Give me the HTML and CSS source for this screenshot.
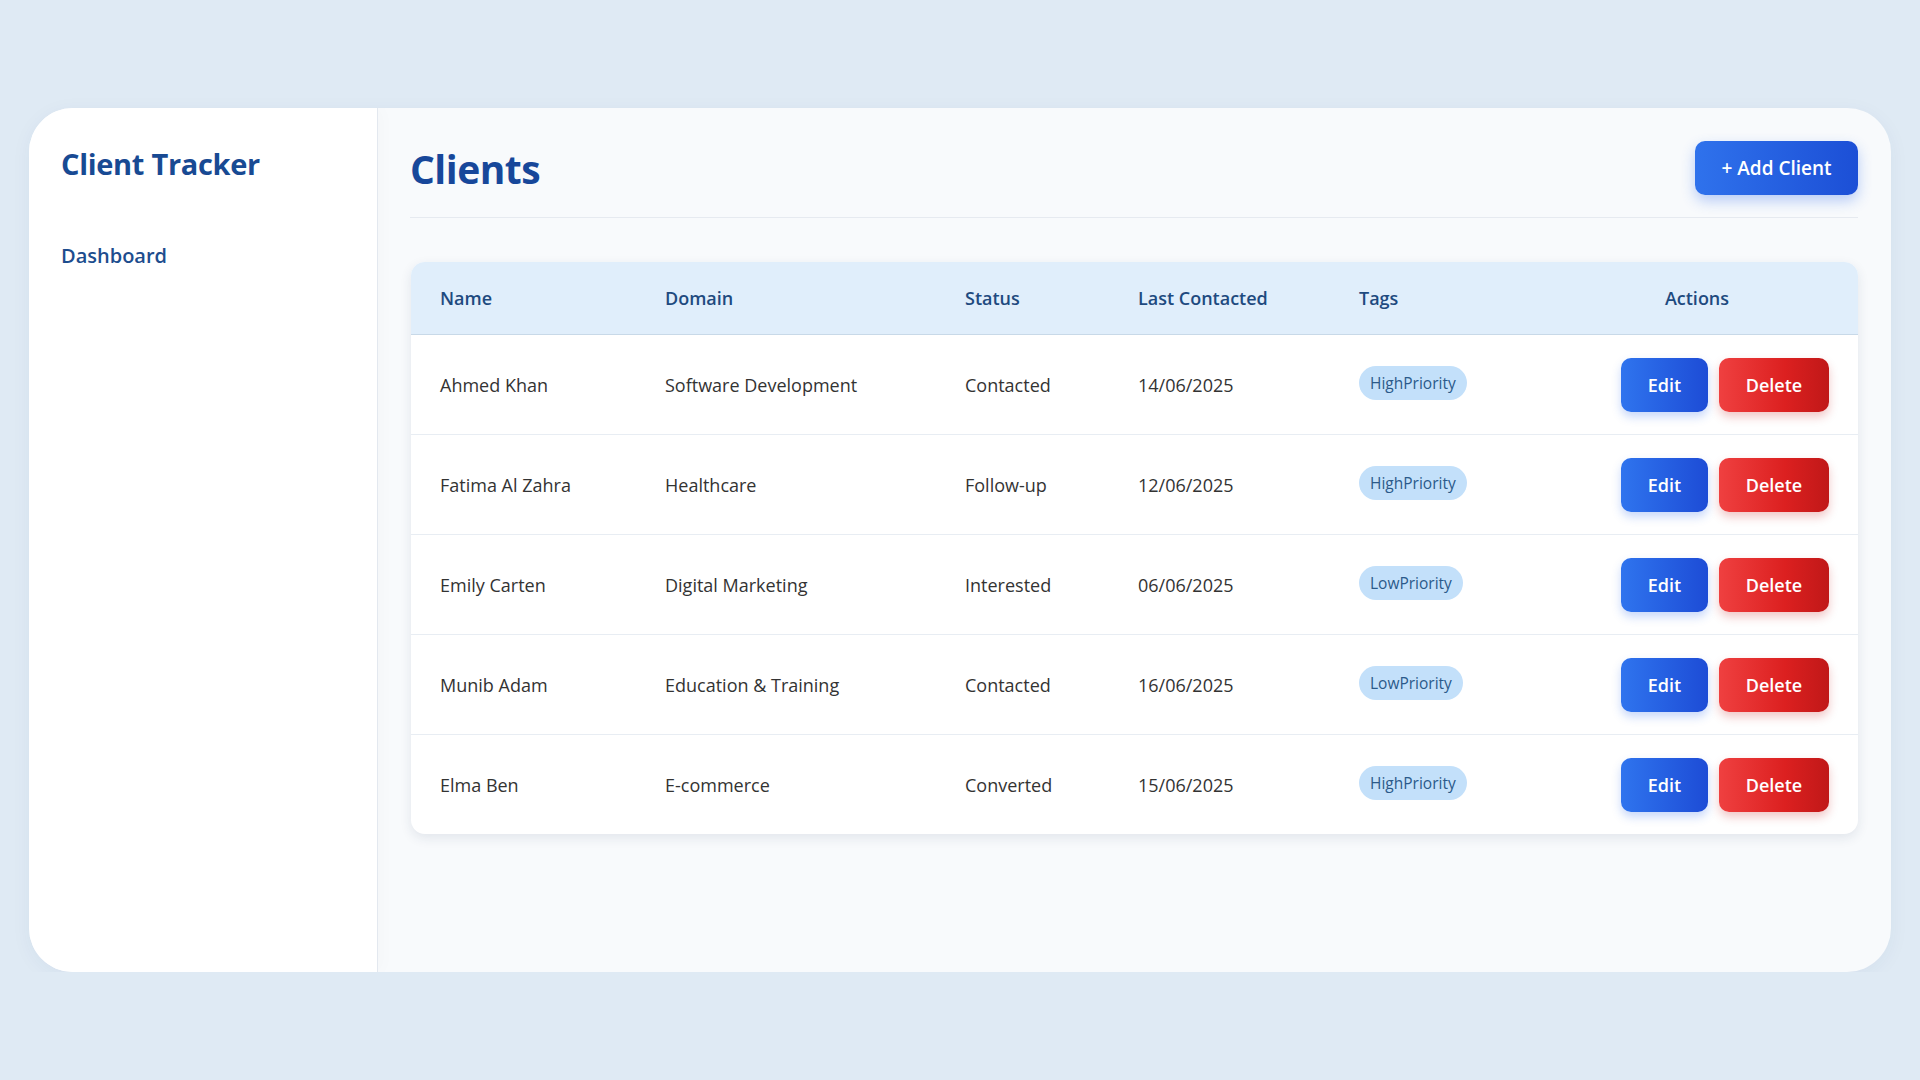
FILE: index.html
```html
<!DOCTYPE html>
<html>
	<head>
		<meta charset="utf-8">
		<title>Client Tracker</title>
		<link rel="stylesheet" href="styles.css">
	</head>
	<body>
		<div class="app">
			<aside class="sidebar">
				<h2 class="brand">Client Tracker</h2>
				<a class="nav-link" href="#">Dashboard</a>
			</aside>
			<main class="main">
				<div class="page-header">
					<h1>Clients</h1>
					<button class="btn btn-add">+ Add Client</button>
				</div>
				<div class="table-wrap">
					<table class="clients">
						<colgroup>
							<col style="width:225px">
							<col style="width:300px">
							<col style="width:173px">
							<col style="width:221px">
							<col style="width:206px">
							<col>
						</colgroup>
						<thead>
							<tr>
								<th>Name</th>
								<th>Domain</th>
								<th>Status</th>
								<th>Last Contacted</th>
								<th>Tags</th>
								<th class="center">Actions</th>
							</tr>
						</thead>
						<tbody>
							<tr>
								<td>Ahmed Khan</td>
								<td>Software Development</td>
								<td>Contacted</td>
								<td>14/06/2025</td>
								<td><span class="tag">HighPriority</span></td>
								<td><div class="actions"><button class="btn btn-edit">Edit</button><button class="btn btn-delete">Delete</button></div></td>
							</tr>
							<tr>
								<td>Fatima Al Zahra</td>
								<td>Healthcare</td>
								<td>Follow-up</td>
								<td>12/06/2025</td>
								<td><span class="tag">HighPriority</span></td>
								<td><div class="actions"><button class="btn btn-edit">Edit</button><button class="btn btn-delete">Delete</button></div></td>
							</tr>
							<tr>
								<td>Emily Carten</td>
								<td>Digital Marketing</td>
								<td>Interested</td>
								<td>06/06/2025</td>
								<td><span class="tag">LowPriority</span></td>
								<td><div class="actions"><button class="btn btn-edit">Edit</button><button class="btn btn-delete">Delete</button></div></td>
							</tr>
							<tr>
								<td>Munib Adam</td>
								<td>Education &amp; Training</td>
								<td>Contacted</td>
								<td>16/06/2025</td>
								<td><span class="tag">LowPriority</span></td>
								<td><div class="actions"><button class="btn btn-edit">Edit</button><button class="btn btn-delete">Delete</button></div></td>
							</tr>
							<tr>
								<td>Elma Ben</td>
								<td>E-commerce</td>
								<td>Converted</td>
								<td>15/06/2025</td>
								<td><span class="tag">HighPriority</span></td>
								<td><div class="actions"><button class="btn btn-edit">Edit</button><button class="btn btn-delete">Delete</button></div></td>
							</tr>
						</tbody>
					</table>
				</div>
			</main>
		</div>
	</body>
</html>
```
FILE: styles.css
```css
html, body{
	margin:0;
	padding:0;
	background:#dfeaf4;
	font-family:"Open Sans", "Noto Sans", sans-serif;
	color:#333;
}
.app{
	display:flex;
	margin:108px 29px 0 29px;
	height:864px;
	border-radius:44px;
	overflow:hidden;
	background:#f8fafc;
	box-shadow:0 4px 20px rgba(30,60,110,0.05);
}
.sidebar{
	width:349px;
	flex-shrink:0;
	background:#ffffff;
	border-right:1px solid #e3e8ef;
	padding:32px 32px 0 32px;
	box-sizing:border-box;
	box-shadow:4px 0 16px rgba(0,0,0,0.02);
}
.brand{
	margin:0;
	font-size:29px;
	font-weight:700;
	color:#184a93;
	line-height:48px;
	letter-spacing:-0.3px;
}
.nav-link{
	display:block;
	margin-top:54px;
	font-size:20px;
	font-weight:600;
	color:#1d4d8e;
	text-decoration:none;
}
.main{
	flex:1;
	padding:33px 33px 0 32px;
}
.page-header{
	display:flex;
	justify-content:space-between;
	align-items:center;
	padding-bottom:22px;
	border-bottom:1px solid #e6eaf0;
}
.page-header h1{
	margin:0;
	font-size:39px;
	font-weight:700;
	color:#17479a;
	letter-spacing:-0.5px;
}
.btn{
	font-family:inherit;
	border:none;
	color:#fff;
	font-weight:600;
	cursor:pointer;
	border-radius:10px;
}
.btn-add{
	width:163px;
	height:54px;
	font-size:19px;
	background:linear-gradient(90deg, #2f72ec, #1c4fd6);
	box-shadow:0 6px 14px rgba(37,99,235,0.3);
}
.table-wrap{
	margin-top:44px;
	margin-left:1px;
	border-radius:14px;
	overflow:hidden;
	background:#fff;
	box-shadow:0 4px 12px rgba(30,50,90,0.1);
}
.clients{
	width:100%;
	border-collapse:collapse;
	table-layout:fixed;
}
.clients th{
	height:72px;
	text-align:left;
	padding:0 29px;
	font-size:18px;
	font-weight:600;
	color:#1e4a7f;
	background:#e0eefb;
	border-bottom:1px solid #c8d9e8;
}
.clients th.center{
	text-align:center;
}
.clients td{
	height:99px;
	padding:0 29px;
	font-size:18px;
	color:#333;
	border-bottom:1px solid #e8edf3;
	white-space:nowrap;
}
.clients tbody tr:last-child td{
	border-bottom:none;
}
.tag{
	display:inline-block;
	padding:6px 11px;
	margin-top:-3px;
	border-radius:18px;
	background:#c3e0fa;
	color:#2b5a8a;
	font-size:15.5px;
}
.actions{
	display:flex;
	justify-content:flex-end;
	gap:11px;
}
.btn-edit{
	width:87px;
	height:54px;
	font-size:18px;
	background:linear-gradient(90deg, #2f74ee, #1d4cd6);
	box-shadow:0 5px 10px rgba(37,99,235,0.25);
}
.btn-delete{
	width:110px;
	height:54px;
	font-size:18px;
	background:linear-gradient(90deg, #ef4040, #dc2020 60%, #c01818);
	box-shadow:0 5px 10px rgba(200,30,30,0.25);
}
```
